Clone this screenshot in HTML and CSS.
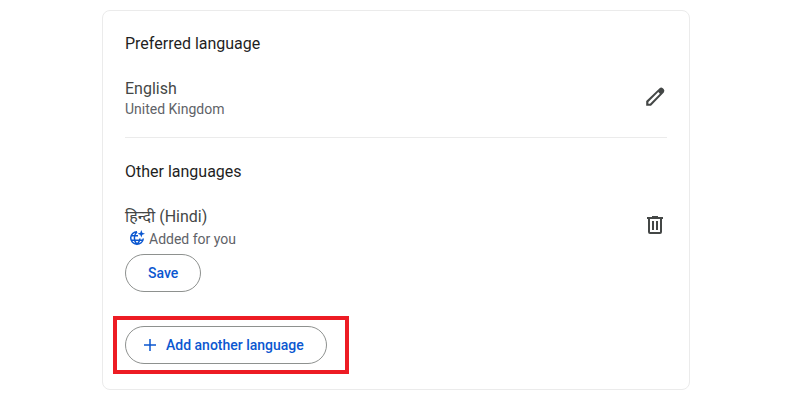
FILE: index.html
```html
<!DOCTYPE html>
<html lang="en">
<head>
    <meta charset="UTF-8">
    <meta name="viewport" content="width=device-width, initial-scale=1.0">
    <title>Language</title>
    <link rel="stylesheet" href="styles.css">
</head>
<body>
    <main class="language-card">
        <section class="preferred">
            <h2>Preferred language</h2>
            <div class="language-row">
                <div class="language-info">
                    <div class="language-name">English</div>
                    <div class="language-detail">United Kingdom</div>
                </div>
                <button type="button" class="icon-button" aria-label="Edit language">
                    <svg viewBox="0 0 24 24" width="24" height="24"><path fill-rule="evenodd" d="M3.2 20.8V16L16.6 3.2Q18.3 2 19.8 3.3L20.8 4.3Q22 5.8 20.8 7.4L8 20.8ZM5.4 18.7H7L16.9 8.7 15.3 7.1 5.4 17Z"/></svg>
                </button>
            </div>
        </section>

        <section class="others">
            <h2>Other languages</h2>
            <div class="language-row">
                <div class="language-info">
                    <div class="language-name"><span lang="hi">हिन्दी</span> (Hindi)</div>
                    <div class="language-detail added">
                        <svg class="globe" viewBox="0 0 16 16" width="16" height="16">
                            <path d="M8 1.7A6.3 6.3 0 1 0 14.3 8.5M8 1.7C4.5 5 4.5 11 8 14.3C10 12.5 10.8 10.5 10.9 8.5M2 5.8h7M2 10.2h12"/>
                            <path class="spark" d="M12.3 0l1 2.7 2.7 1-2.7 1-1 2.7-1-2.7-2.7-1 2.7-1z"/>
                        </svg>
                        <span>Added for you</span>
                    </div>
                </div>
                <button type="button" class="icon-button" aria-label="Remove language">
                    <svg viewBox="0 0 24 24" width="24" height="24"><path fill-rule="evenodd" d="M7 21Q5 21 5 19V6H4V4h5V3h6v1h5v2h-1v13Q19 21 17 21ZM7 19h10V6H7ZM9 17h2V8H9ZM13 17h2V8h-2Z"/></svg>
                </button>
            </div>
            <button type="button" class="pill-button">Save</button>
        </section>

        <div class="highlight">
            <button type="button" class="pill-button add-button">
                <svg viewBox="0 0 12 12" width="12" height="12"><path d="M6 0v12M0 6h12"/></svg>
                Add another language
            </button>
        </div>
    </main>
</body>
</html>
```

FILE: styles.css
```css
:root {
    --text-color: #1f1f1f;
    --name-color: #444746;
    --detail-color: #5f6368;
    --primary-color: #0b57d0;
    --outline-color: #8e918f;
    --border-color: #ebebeb;
    --highlight-color: #ed1c24;
}

* {
    box-sizing: border-box;
}

body {
    margin: 0;
    padding: 10px 110px 10px 102px;
    background-color: #fff;
    color: var(--text-color);
    font-family: Roboto, "Noto Sans", sans-serif;
}

.language-card {
    padding: 21px 22px 15px;
    border: 1px solid var(--border-color);
    border-radius: 8px;
}

h2 {
    margin: 0;
    font-size: 16px;
    font-weight: 400;
    line-height: 24px;
}

.preferred {
    padding-bottom: 19px;
    border-bottom: 1px solid var(--border-color);
}

.others {
    padding-top: 22px;
}

.language-row {
    display: flex;
    align-items: flex-start;
    justify-content: space-between;
    margin-top: 22px;
}

.language-name {
    color: var(--name-color);
    font-size: 16px;
    line-height: 22px;
}

.language-detail {
    color: var(--detail-color);
    font-size: 14px;
    line-height: 18px;
}

.added {
    display: flex;
    gap: 4px;
    padding: 2px 0 0 4px;
}

.globe path {
    fill: none;
    stroke: var(--primary-color);
    stroke-width: 1.5;
}

.globe .spark {
    fill: var(--primary-color);
    stroke: none;
}

.icon-button {
    display: flex;
    padding: 7px 0;
    border: none;
    background: none;
    cursor: pointer;
}

.icon-button svg {
    fill: var(--name-color);
}

.pill-button {
    height: 38px;
    padding: 0 22px;
    border: 1px solid var(--outline-color);
    border-radius: 19px;
    background-color: #fff;
    color: var(--primary-color);
    font-family: inherit;
    font-size: 14px;
    font-weight: 500;
    cursor: pointer;
}

.others .pill-button {
    margin-top: 6px;
}

.highlight {
    width: fit-content;
    margin: 24px 0 0 -12px;
    padding: 6px 18px 6px 8px;
    border: 4px solid var(--highlight-color);
}

.add-button {
    display: flex;
    align-items: center;
    gap: 10px;
    padding: 0 22px 0 18px;
}

.add-button svg {
    fill: none;
    stroke: var(--primary-color);
    stroke-width: 1.5;
}
```
